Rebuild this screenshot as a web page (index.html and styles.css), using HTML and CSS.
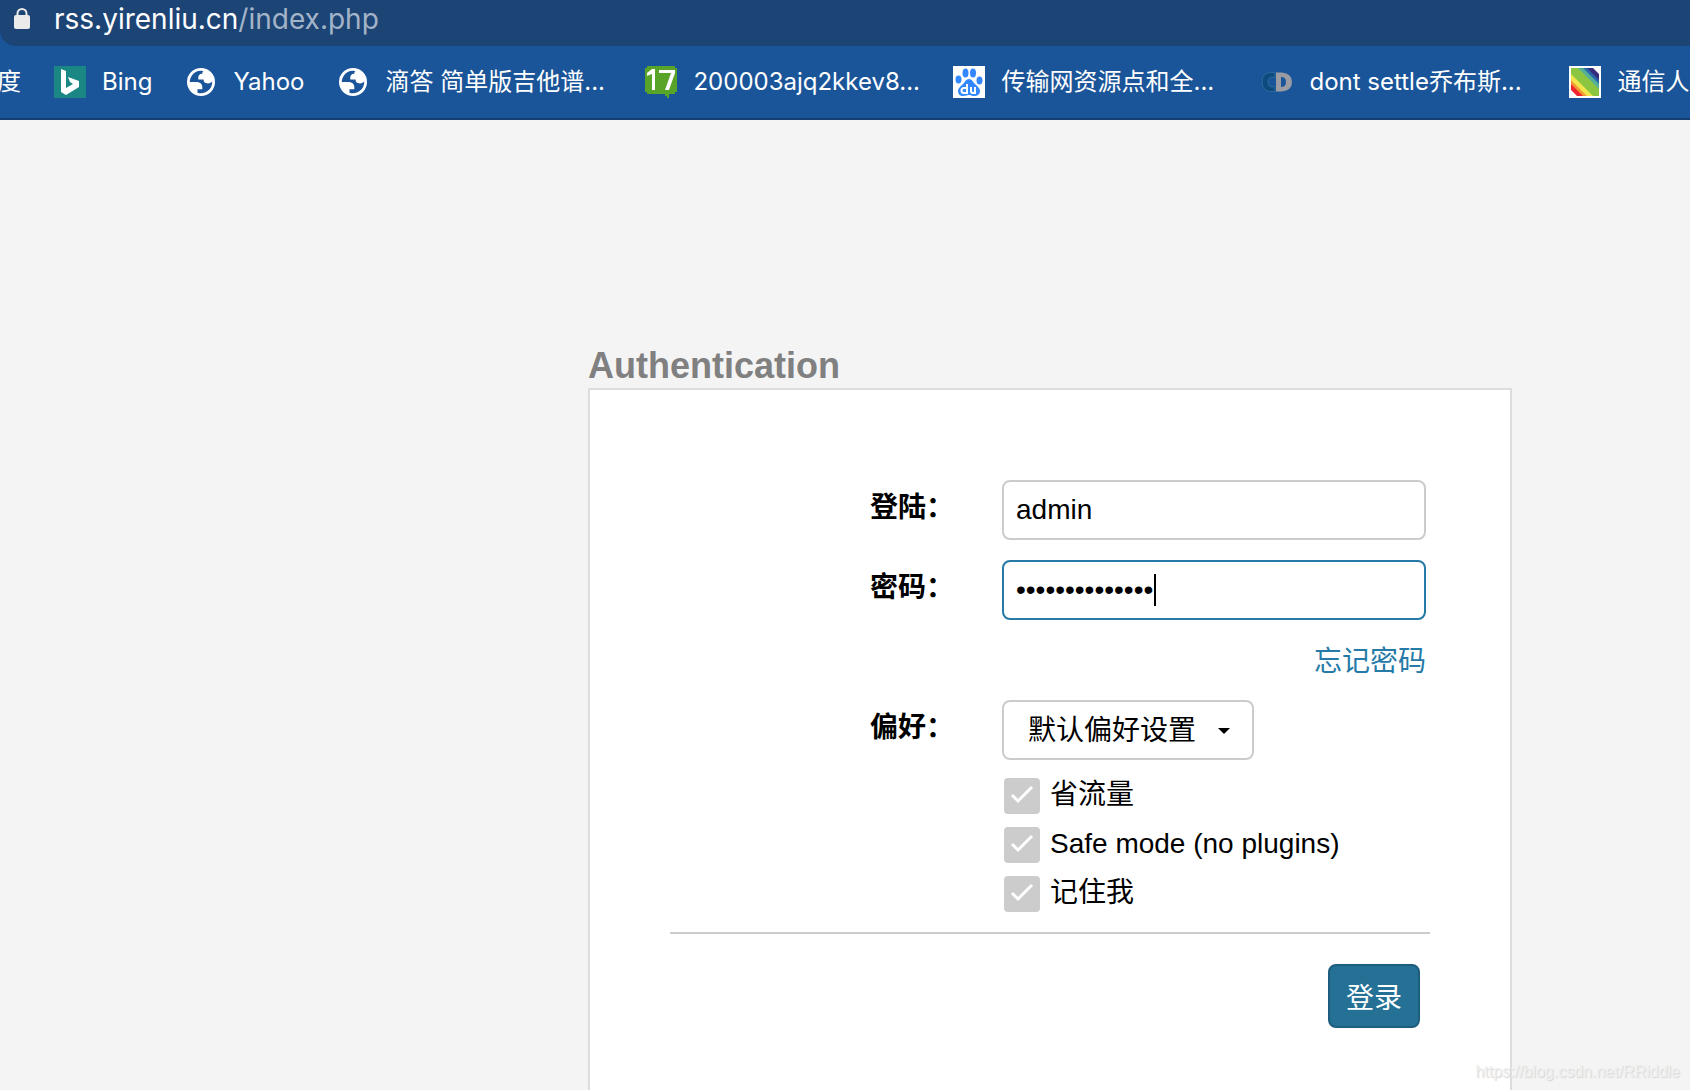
FILE: index.html
```html
<!DOCTYPE html>
<html lang="zh-CN">
<head>
    <meta charset="UTF-8">
    <meta name="viewport" content="width=device-width, initial-scale=1.0">
    <title>Authentication</title>
    <link rel="stylesheet" href="styles.css">
</head>
<body>
    <header class="browser">
        <div class="address-bar">
            <svg class="lock" width="16" height="22" viewBox="0 0 16 22">
                <path d="M3.5 9V5.5a4.5 4.5 0 0 1 9 0V9" fill="none" stroke="#ebebeb" stroke-width="2"/>
                <rect y="7" width="16" height="14" rx="2" fill="#ebebeb"/>
            </svg>
            <span class="url">rss.yirenliu.cn<span class="path">/index.php</span></span>
        </div>
        <nav class="bookmarks">
            <a href="#" class="bookmark cut">度</a>
            <a href="#" class="bookmark">
                <svg width="32" height="32" viewBox="0 0 32 32">
                    <rect width="32" height="32" fill="#1b8784"/>
                    <path d="M7 3l5 2v17l7-4-3-2-2-5 11 4v6l-13 8-5-3z" fill="#fff"/>
                </svg>
                <span>Bing</span>
            </a>
            <a href="#" class="bookmark">
                <svg width="32" height="32" viewBox="0 0 32 32">
                    <path transform="translate(-.8 -.8) scale(1.4)" fill="#fff" fill-rule="evenodd" d="M12 22a10 10 0 1 1 0-20 10 10 0 0 1 0 20zM4 12h4.400c3.407.022 4.922 1.730 4.543 5.127H9.488v2.470a8.004 8.004 0 0 0 10.498-8.083C19.327 12.504 18.332 13 17 13c-2.137 0-3.206-.916-3.206-2.750h-3.748c-.274-2.728.683-4.092 2.870-4.092 0-.975.327-1.597.811-1.970A8.004 8.004 0 0 0 4 12z"/>
                </svg>
                <span>Yahoo</span>
            </a>
            <a href="#" class="bookmark">
                <svg width="32" height="32" viewBox="0 0 32 32">
                    <path transform="translate(-.8 -.8) scale(1.4)" fill="#fff" fill-rule="evenodd" d="M12 22a10 10 0 1 1 0-20 10 10 0 0 1 0 20zM4 12h4.400c3.407.022 4.922 1.730 4.543 5.127H9.488v2.470a8.004 8.004 0 0 0 10.498-8.083C19.327 12.504 18.332 13 17 13c-2.137 0-3.206-.916-3.206-2.750h-3.748c-.274-2.728.683-4.092 2.870-4.092 0-.975.327-1.597.811-1.970A8.004 8.004 0 0 0 4 12z"/>
                </svg>
                <span class="long">滴答 简单版吉他谱...</span>
            </a>
            <a href="#" class="bookmark">
                <svg width="32" height="32" viewBox="0 0 32 32">
                    <path d="M2 0h28v2h2v24h-2v2h-6v4h-2v-2h-2v-2H2v-2H0V2h2z" fill="#58a428"/>
                    <path d="M2 7l5-4h3v21H7V8L2 10zM14 4h16v3l-6 17h-4l6-17H14z" fill="#fff"/>
                </svg>
                <span class="long">200003ajq2kkev8...</span>
            </a>
            <a href="#" class="bookmark">
                <svg width="32" height="32" viewBox="0 0 32 32">
                    <rect width="32" height="32" fill="#fff"/>
                    <g fill="#3388ff">
                        <ellipse cx="12.500" cy="7" rx="3" ry="4.500"/>
                        <ellipse cx="20" cy="7" rx="3" ry="4.500"/>
                        <ellipse cx="5.500" cy="13.500" rx="3" ry="4"/>
                        <ellipse cx="26.500" cy="14.500" rx="3" ry="4"/>
                        <path d="M16 13c3 0 4 3 6 5s5 4 5 7c0 4-3 5-6 5s-3-1-5-1-3 1-6 1-5-2-5-5 3-5 5-7 3-5 6-5z"/>
                    </g>
                    <path d="M14 18v9h-3a2.500 2.500 0 0 1 0-5h3M18 21v4q0 2 2 2h2v-6" fill="none" stroke="#fff" stroke-width="2"/>
                </svg>
                <span class="long">传输网资源点和全...</span>
            </a>
            <a href="#" class="bookmark">
                <svg width="32" height="32" viewBox="0 0 32 32">
                    <path d="M14 6.500v5q-7-2-7 4.500t7 4.500v5Q1 27 1 16T14 6.500z" fill="#0d4a7d" stroke="#2c6a9e"/>
                    <path d="M15 6.500h6q10 1 10 9.500t-10 9.500h-6zM20 11v10q5 0 5-5t-5-5z" fill="#9b9ba3" fill-rule="evenodd"/>
                </svg>
                <span class="long">dont settle乔布斯...</span>
            </a>
            <a href="#" class="bookmark">
                <svg width="32" height="32" viewBox="0 0 32 32">
                    <rect width="32" height="32" fill="#fff"/>
                    <path d="M2 2h28v28H2z" fill="#8cc540"/>
                    <path d="M9 2h21v21z" fill="#55b09a"/>
                    <path d="M14 2h16v16z" fill="#2868a8"/>
                    <path d="M18 2h12v12z" fill="#352c7c"/>
                    <path d="M24 2h6v6z" fill="#fff"/>
                    <path d="M2 8l22 22H2z" fill="#f2e54c"/>
                    <path d="M2 14l16 16H2z" fill="#f09a30"/>
                    <path d="M2 18l12 12H2z" fill="#ee2430"/>
                    <path d="M2 24l6 6H2z" fill="#fff"/>
                </svg>
                <span>通信人家园</span>
            </a>
        </nav>
    </header>

    <main class="content">
        <h1>Authentication</h1>
        <form class="login-box">
            <div class="row">
                <label class="row-label" for="login">登陆：</label>
                <input class="text-box" type="text" id="login" name="login" value="admin">
            </div>
            <div class="row">
                <label class="row-label" for="password">密码：</label>
                <div class="password">
                    <input class="text-box active" type="password" id="password" name="password" value="12345678901234">
                    <span class="caret"></span>
                </div>
            </div>
            <a class="forgot" href="#">忘记密码</a>
            <div class="row">
                <label class="row-label" for="profile">偏好：</label>
                <div class="profile">
                    <select id="profile" name="profile">
                        <option>默认偏好设置</option>
                    </select>
                    <svg class="arrow" width="12" height="6" viewBox="0 0 12 6"><path d="M0 0h12L6 6z"/></svg>
                </div>
            </div>
            <div class="options">
                <label class="option">
                    <input type="checkbox" name="bw_limit" checked>
                    <svg class="tick" width="36" height="36" viewBox="0 0 36 36"><path d="M8 17l6 6L28 9"/></svg>
                    <span>省流量</span>
                </label>
                <label class="option">
                    <input type="checkbox" name="safe_mode" checked>
                    <svg class="tick" width="36" height="36" viewBox="0 0 36 36"><path d="M8 17l6 6L28 9"/></svg>
                    <span>Safe mode (no plugins)</span>
                </label>
                <label class="option">
                    <input type="checkbox" name="remember_me" checked>
                    <svg class="tick" width="36" height="36" viewBox="0 0 36 36"><path d="M8 17l6 6L28 9"/></svg>
                    <span>记住我</span>
                </label>
            </div>
            <hr>
            <div class="actions">
                <button type="submit">登录</button>
            </div>
        </form>
    </main>
    <span class="watermark">https://blog.csdn.net/RRiddle</span>
</body>
</html>
```
FILE: styles.css
```css
* {
    box-sizing: border-box;
}

body {
    display: flex;
    flex-direction: column;
    min-height: 100vh;
    margin: 0;
    position: relative;
    background-color: #f4f4f4;
    color: #000;
    font-family: "Liberation Sans", "Noto Sans CJK SC", sans-serif;
    font-size: 28px;
}

/* Browser bars */
.browser {
    background-color: #1a5599;
    border-bottom: 2px solid #153f70;
    font-family: Inter, "Noto Sans CJK SC", sans-serif;
    overflow: hidden;
}

.address-bar {
    display: flex;
    align-items: center;
    gap: 24px;
    height: 46px;
    padding: 0 14px 8px;
    background-color: #1c4475;
    border-bottom-left-radius: 16px;
}

.url {
    color: #fff;
    font-size: 28px;
    line-height: 36px;
}

.url .path {
    color: #a4b4c8;
}

.bookmarks {
    display: flex;
    align-items: center;
    gap: 33px;
    height: 72px;
}

.bookmark {
    display: flex;
    flex-shrink: 0;
    align-items: center;
    gap: 16px;
    color: #fff;
    font-size: 24px;
    line-height: 36px;
    text-decoration: none;
    white-space: nowrap;
}

.bookmark.cut {
    justify-content: flex-end;
    width: 21px;
}

.bookmark .long {
    width: 227px;
}

/* Login form */
.content {
    display: flex;
    flex: 1;
    flex-direction: column;
    width: 100%;
    max-width: 1102px;
    margin-left: auto;
    padding: 224px 178px 0 0;
}

h1 {
    margin: 0;
    color: #808080;
    font-size: 36px;
    line-height: 44px;
}

.login-box {
    display: flex;
    flex: 1;
    flex-direction: column;
    padding: 90px 80px 40px;
    background-color: #fff;
    border: 2px solid #ddd;
    border-bottom: 0;
}

.row {
    display: grid;
    grid-template-columns: 284px 1fr;
    gap: 48px;
    margin: 0 4px 20px 0;
}

.row-label {
    padding-top: 8px;
    font-weight: bold;
    line-height: 40px;
    text-align: right;
}

.text-box {
    width: 100%;
    height: 60px;
    padding: 0 12px;
    border: 2px solid #ccc;
    border-radius: 8px;
    background-color: #fff;
    color: #000;
    font-family: inherit;
    font-size: 28px;
    outline: none;
}

.text-box.active,
.text-box:focus {
    border-color: #257aa7;
}

.password,
.profile {
    display: flex;
    position: relative;
}

.caret {
    position: absolute;
    top: 14px;
    left: 152px;
    width: 2px;
    height: 32px;
    background-color: #000;
}

.forgot {
    align-self: flex-end;
    margin: 2px 4px 18px 0;
    color: #257aa7;
    line-height: 40px;
    text-decoration: none;
}

.profile {
    width: 252px;
}

.profile select {
    width: 100%;
    height: 60px;
    padding: 0 24px;
    border: 2px solid #ccc;
    border-radius: 8px;
    background-color: #fff;
    color: #000;
    font-family: inherit;
    font-size: 28px;
    appearance: none;
}

.arrow {
    position: absolute;
    top: 28px;
    right: 24px;
    pointer-events: none;
}

.options {
    display: grid;
    gap: 13px;
    margin: -2px 0 0 334px;
}

.option {
    display: flex;
    align-items: center;
    gap: 10px;
    position: relative;
    line-height: 36px;
}

.option input {
    width: 36px;
    height: 36px;
    margin: 0;
    border-radius: 4px;
    background-color: #ccc;
    appearance: none;
}

.option span {
    margin-top: -2px;
}

.tick {
    position: absolute;
    top: 0;
    left: 0;
    fill: none;
    stroke: #fff;
    stroke-width: 3px;
    pointer-events: none;
}

.option input:not(:checked) + .tick {
    display: none;
}

hr {
    width: 100%;
    margin: 20px 0 30px;
    border: 0;
    border-top: 2px solid #ccc;
}

.actions {
    display: flex;
    justify-content: flex-end;
    padding-right: 10px;
}

.actions button {
    width: 92px;
    height: 64px;
    padding: 0;
    border: 2px solid #1c5d80;
    border-radius: 8px;
    background-color: #257095;
    color: #fff;
    font-family: inherit;
    font-size: 28px;
}

.watermark {
    position: absolute;
    right: 10px;
    bottom: 8px;
    color: #f0f0f0;
    font-size: 16px;
    line-height: 20px;
    text-shadow: 1px 1px 1px #d4d4d4;
}
```
